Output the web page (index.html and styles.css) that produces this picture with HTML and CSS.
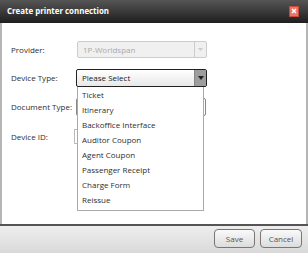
FILE: index.html
```html
<!DOCTYPE html>
<html>
<head>
<meta charset="utf-8">
<link rel="stylesheet" href="styles.css">
</head>
<body>
<div class="dialog">
  <div class="titlebar">
    <span class="title">Create printer connection</span>
    <span class="close">
      <svg width="8" height="8" viewBox="0 0 8 8"><path d="M2 2L6 6M6 2L2 6" stroke="#fff" stroke-width="1.5"/></svg>
    </span>
  </div>
  <div class="content">
    <div class="row row-provider">
      <span class="label">Provider:</span>
      <div class="select disabled">
        <span class="value">1P-Worldspan</span>
        <span class="arrow"><svg width="5" height="3" viewBox="0 0 5 3"><path d="M0 0H5L2.5 3Z" fill="#ccc"/></svg></span>
      </div>
    </div>
    <div class="row row-device">
      <span class="label">Device Type:</span>
      <div class="select active">
        <span class="value">Please Select</span>
        <span class="arrow"><svg width="6" height="4" viewBox="0 0 6 4"><path d="M0 0H6L3 4Z" fill="#222"/></svg></span>
        <ul class="menu">
          <li>Ticket</li>
          <li>Itinerary</li>
          <li>Backoffice Interface</li>
          <li>Auditor Coupon</li>
          <li>Agent Coupon</li>
          <li>Passenger Receipt</li>
          <li>Charge Form</li>
          <li>Reissue</li>
        </ul>
      </div>
    </div>
    <div class="row row-doc">
      <span class="label">Document Type:</span>
      <div class="select plain"></div>
    </div>
    <div class="row row-id">
      <span class="label">Device ID:</span>
      <div class="input"></div>
    </div>
  </div>
  <div class="footer">
    <button class="btn btn-save">Save</button>
    <button class="btn btn-cancel">Cancel</button>
  </div>
</div>
</body>
</html>
```
FILE: styles.css
```css
html, body {
  margin: 0;
  padding: 0;
  background: #fff;
}
body {
  font-family: "Open Sans", "Noto Sans", sans-serif;
  font-size: 8px;
  color: #2e2e2e;
}
.dialog {
  width: 308px;
  height: 253px;
  box-sizing: border-box;
  display: flex;
  flex-direction: column;
  border-left: 2px solid #b5b5b5;
  border-right: 2px solid #b5b5b5;
  background: #fff;
}
.titlebar {
  height: 23px;
  box-sizing: border-box;
  margin: 0 -2px;
  background: linear-gradient(#555 0%, #3a3a3a 50%, #1e1e1e 100%);
  display: flex;
  align-items: center;
  justify-content: space-between;
  padding: 0 9px 1px 7px;
}
.title {
  color: #fff;
  font-weight: 700;
  font-size: 7.9px;
  white-space: nowrap;
}
.close {
  width: 10px;
  height: 11px;
  background: #e8766a;
  border: 1px solid #c9493d;
  box-sizing: border-box;
  display: flex;
  align-items: center;
  justify-content: center;
}
.content {
  flex: 1;
  padding: 17px 0 0 9px;
  display: flex;
  flex-direction: column;
}
.row {
  display: flex;
  align-items: center;
}
.label {
  width: 65px;
  flex: none;
  white-space: nowrap;
}
.row-provider { height: 18px; }
.row-device { height: 19px; margin-top: 10px; }
.row-doc { height: 19px; margin-top: 10px; }
.row-id { height: 15px; margin-top: 13px; }
.select {
  position: relative;
  width: 131px;
  height: 18px;
  box-sizing: border-box;
  display: flex;
  align-items: center;
  border: 1px solid #ccc;
  border-radius: 2px;
}
.select .value {
  flex: 1;
  padding-left: 5px;
}
.select .arrow {
  width: 12px;
  height: 100%;
  box-sizing: border-box;
  display: flex;
  align-items: center;
  justify-content: center;
  border-left: 1px solid #ccc;
}
.select.disabled {
  background: #f0f0f0;
  height: 17px;
  margin-left: 1px;
  width: 130px;
}
.select.disabled .value { color: #aaa; }
.select.active {
  border: 1px solid #222;
  border-radius: 2px;
  background: linear-gradient(#fff, #e8e8e8);
}
.select.active .value { color: #222; }
.select.active .arrow {
  background: #9d9d9d;
  border-left: 1px solid #888;
}
.select.plain {
  border-color: #888;
  background: #fff;
  width: 130px;
}
.input {
  width: 130px;
  height: 15px;
  margin-left: -2px;
  border: 1px solid #bbb;
  box-sizing: border-box;
}
.menu {
  position: absolute;
  top: 17px;
  left: 0;
  width: 125px;
  margin: 0;
  padding: 0 0 3px 0;
  list-style: none;
  background: #fff;
  border: 1px solid #aaa;
  border-top: none;
  z-index: 5;
}
.menu li {
  height: 15px;
  line-height: 15px;
  padding-left: 4px;
  white-space: nowrap;
}
.footer {
  height: 29px;
  box-sizing: border-box;
  margin: 0 -2px;
  border-top: 2px solid #555;
  background: linear-gradient(#eee, #d9d9d9);
  display: flex;
  justify-content: flex-end;
  align-items: center;
  gap: 5px;
  padding: 0 6px 2px 0;
}
.btn {
  height: 19px;
  padding: 0;
  font-family: "Open Sans", "Noto Sans", sans-serif;
  font-size: 8px;
  color: #555;
  border: 1px solid #777;
  border-radius: 4px;
  background: linear-gradient(#fafafa, #dcdcdc);
}
.btn-save { width: 41px; }
.btn-cancel { width: 42px; }
```
